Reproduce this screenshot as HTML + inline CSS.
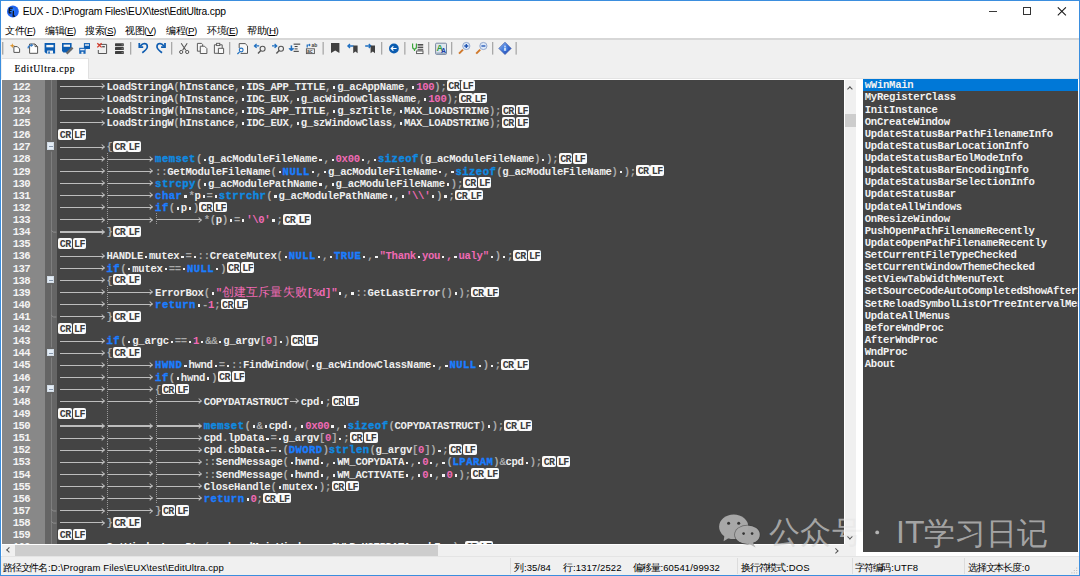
<!DOCTYPE html>
<html><head><meta charset="utf-8">
<style>
*{margin:0;padding:0;box-sizing:border-box}
html,body{width:1080px;height:576px;overflow:hidden;background:#fff;font-family:"Liberation Sans",sans-serif}
#win{position:absolute;left:0;top:0;width:1080px;height:576px;background:#fff;overflow:hidden}
.bd{position:absolute;background:#3b8ede}
.abs{position:absolute}
/* title */
#title{position:absolute;left:22.7px;top:6.4px;font-size:10.3px;color:#000;white-space:nowrap;letter-spacing:-0.22px}
/* menu */
.mi{position:absolute;top:24.5px;font-size:9.8px;letter-spacing:-0.45px;color:#000;white-space:nowrap}
#toolbar{position:absolute;left:1px;top:37.8px;width:1078px;height:42px;background:#f0f0f0;border-top:2px solid #d7d7d7}
.sep{position:absolute;top:42px;width:1.4px;height:12.6px;background:#a8a8a8}
#tab{position:absolute;left:1.5px;top:58.4px;width:87.5px;height:21px;background:#fff;border-right:1px solid #e0e0e0;border-top:1px solid #e2e2e2}
#tabtxt{position:absolute;left:14.6px;top:63px;font-family:"Liberation Serif",serif;font-size:9.6px;letter-spacing:0.66px;color:#000;font-weight:normal;-webkit-text-stroke:0.15px #000;white-space:nowrap}
#wline{position:absolute;left:88px;top:77.6px;width:991px;height:1px;background:#e4e4e4}
#wline2{position:absolute;left:1px;top:78.6px;width:1078px;height:1.4px;background:#fff}
/* editor */
#ed{position:absolute;left:2px;top:80px;width:842px;height:464px;background:#444;overflow:hidden}
#lnm{position:absolute;left:0;top:0;width:43px;height:464px;background:#888}
#fldm{position:absolute;left:43px;top:0;width:12px;height:464px;background:#656565}
#fline{position:absolute;left:48.6px;top:0;width:1.4px;height:464px;background:#7e7e7e}
.fbox{position:absolute;left:46.8px;width:7.4px;height:7.4px;background:#e4edf6;border:0.6px solid #d2dce6;box-shadow:0 0 0 1.6px #656565}
.fbox:after{content:"";position:absolute;left:1.6px;top:3px;width:3.4px;height:1px;background:#8696ac}
.fend{position:absolute;left:49px;width:5px;height:4px;border-left:0;border-bottom:1px solid #8a8a8a}
#code{position:absolute;left:-2px;top:-80px;width:1080px;height:576px}
.ln{position:absolute;left:0;height:12.12px;width:1080px}
.ln span,.ln b{position:absolute;top:0.8px;font-family:"Liberation Mono",monospace;font-size:10.6px;line-height:12.12px;white-space:pre;font-weight:bold}
.ln span{letter-spacing:-0.29px}
.ln b{letter-spacing:0.44px;-webkit-text-stroke:0.35px currentColor}
.tx{color:#eeeeee}
.op{color:#a9a9a9}
.nm{color:#f06ab4}
.st{color:#f06ab4}
.cj{font-family:"Liberation Sans",sans-serif !important;font-weight:normal !important;font-size:12.3px !important;letter-spacing:0 !important;top:-0.2px !important}
.kw1{color:#0f8be3}
.kw2{color:#1a7dff}
.tb{position:absolute;top:6.1px;height:1.1px;background:#bdbdbd}
.tb:after{content:"";position:absolute;right:0px;top:-1.7px;width:3.1px;height:3.1px;border-right:1.1px solid #bdbdbd;border-top:1.1px solid #bdbdbd;transform:rotate(45deg);transform-origin:center}
.sp{position:absolute;top:6.1px;width:2.2px;height:2.6px;background:#f4f4f4}
.eol{position:absolute;top:0.6px;width:13.6px;height:10.8px;background:#fafafa;border-radius:2px;color:#3c3c3c;font-style:normal;font-family:"Liberation Mono",monospace;font-weight:bold;font-size:10px;line-height:13.1px;text-align:center;letter-spacing:-0.6px;overflow:hidden}
.gd{position:absolute;top:0;width:1px;height:12.12px;background:repeating-linear-gradient(to bottom,#9a9a9a 0,#9a9a9a 1px,transparent 1px,transparent 2px)}
.no{position:absolute;left:2px;width:28px;padding-top:0.8px;text-align:right;font-family:"Liberation Mono",monospace;font-weight:bold;font-size:10.6px;line-height:12.12px;letter-spacing:-0.6px;color:#f4f4f4}
/* scrollbars */
#vsb{position:absolute;left:844px;top:80px;width:12px;height:464px;background:#f0f0f0;border-left:1px solid #fff}
#hsb{position:absolute;left:2px;top:544px;width:842px;height:12px;background:#f0f0f0;border-top:1px solid #fff}
#corner{position:absolute;left:844px;top:544px;width:12px;height:12px;background:#f0f0f0}
.chev{position:absolute;width:3.8px;height:3.8px;border-left:1.7px solid #505050;border-top:1.7px solid #505050}
/* symbol list */
#syl{position:absolute;left:863px;top:79px;width:215px;height:472.6px;background:#444;overflow:hidden}
.sy{position:absolute;left:0;width:215px;height:12.12px;padding-left:1.8px;padding-top:0.3px;font-family:"Liberation Mono",monospace;font-weight:bold;font-size:10.6px;line-height:12.12px;letter-spacing:-0.29px;color:#f2f2f2;white-space:pre}
.sy.sel{background:#0078d7}
/* status */
#status{position:absolute;left:1px;top:556px;width:1078px;height:19px;background:#f0f0f0;border-top:1px solid #e4e4e4}
.cjs{letter-spacing:-1.22px;margin-right:1.1px}
.stt{position:absolute;top:561.5px;font-size:9.5px;letter-spacing:0.12px;color:#000;white-space:nowrap}
.ssep{position:absolute;top:558px;width:1px;height:16px;background:#dcdcdc}
#wm{position:absolute;left:0;top:0;width:1080px;height:576px;pointer-events:none}
.wmt{position:absolute;font-size:31px;line-height:40px;font-weight:300;color:rgba(214,214,214,0.68);white-space:nowrap}
</style></head><body><div id="win">
<div class="bd" style="left:0;top:0;width:1080px;height:1px"></div>
<div class="bd" style="left:0;top:0;width:1.3px;height:576px"></div>
<div class="bd" style="left:1078.7px;top:0;width:1.3px;height:576px"></div>
<div class="bd" style="left:0;top:574.6px;width:1080px;height:1.4px"></div>

<!-- title bar -->
<svg class="abs" style="left:6px;top:4.5px" width="14" height="14" viewBox="0 0 14 14">
 <circle cx="6.9" cy="6.5" r="5.9" fill="#1f63ee"/>
 <circle cx="6.2" cy="5.5" r="3" fill="#2f8cff" opacity="0.5"/>
 <path d="M3.3 3.1 L6.7 3.1 M3.1 5.4 L5.6 5.4 M2.9 7.8 L5.4 7.8 M3.5 3.1 L3.1 7.8 M7.4 5.8 L7.2 11.2 L9 11.2" stroke="#101010" stroke-width="1.25" fill="none"/>
</svg>
<div id="title">EUX - D:\Program Files\EUX\test\EditUltra.cpp</div>
<div class="abs" style="left:989px;top:10.5px;width:8px;height:1.1px;background:#3a3a3a"></div>
<div class="abs" style="left:1023.1px;top:7.1px;width:7.8px;height:7.8px;border:1px solid #333"></div>
<svg class="abs" style="left:1057px;top:7px" width="10" height="9" viewBox="0 0 10 9"><path d="M0.8 0.3 L8.9 8.4 M8.9 0.3 L0.8 8.4" stroke="#1a1a1a" stroke-width="1.05"/></svg>

<!-- menu -->
<div class="mi" style="left:5px">文件(<u>F</u>)</div>
<div class="mi" style="left:45px">编辑(<u>E</u>)</div>
<div class="mi" style="left:85px">搜索(<u>S</u>)</div>
<div class="mi" style="left:125px">视图(<u>V</u>)</div>
<div class="mi" style="left:166px">编程(<u>P</u>)</div>
<div class="mi" style="left:207px">环境(<u>E</u>)</div>
<div class="mi" style="left:247px">帮助(<u>H</u>)</div>

<div id="toolbar"></div>
<svg class="abs" style="left:0;top:0" width="540" height="60" viewBox="0 0 540 60">
<!-- gripper -->
<rect x="2" y="42" width="1.4" height="12.6" fill="#a8a8a8"/>
<!-- separators -->
<g fill="#a9a9a9">
<rect x="130" y="42" width="1.3" height="12.6"/>
<rect x="171" y="42" width="1.3" height="12.6"/>
<rect x="229" y="42" width="1.3" height="12.6"/>
<rect x="322.5" y="42" width="1.3" height="12.6"/>
<rect x="381" y="42" width="1.3" height="12.6"/>
<rect x="404.2" y="42" width="1.3" height="12.6"/>
<rect x="428" y="42" width="1.3" height="12.6"/>
<rect x="451" y="42" width="1.3" height="12.6"/>
<rect x="492" y="42" width="1.3" height="12.6"/>
<rect x="515.5" y="42" width="1.3" height="12.6"/>
</g>
<!-- 1 new -->
<path d="M13.9 46.6 H17.3 L19.6 48.9 V52.4 H13.9 Z" fill="#fff" stroke="#555" stroke-width="1"/>
<path d="M12.3 43.3 L13 45.1 L14.8 45.8 L13 46.5 L12.3 48.3 L11.6 46.5 L9.8 45.8 L11.6 45.1 Z" fill="#dc9530"/>
<!-- 2 open -->
<path d="M29.6 44 H35 L37.6 46.6 V53.3 H29.6 Z" fill="#fff" stroke="#555" stroke-width="1"/>
<path d="M35 44 V46.6 H37.6" fill="none" stroke="#555" stroke-width="0.9"/>
<path d="M28 48.3 Q28.4 45.3 31.8 45.2" fill="none" stroke="#3b7fc8" stroke-width="1.3"/>
<path d="M31 43.6 L33.4 45.3 L31 47 Z" fill="#3b7fc8"/>
<!-- 3 save -->
<path d="M44.6 43.1 H55.1 V53.6 H46.1 L44.6 52.1 Z" fill="#0c5db2"/>
<rect x="46.3" y="44.9" width="7.2" height="2.4" fill="#f6f6f6"/>
<rect x="47.2" y="50.6" width="5.8" height="3" fill="#f4f4f4"/>
<rect x="48.3" y="51.4" width="1.5" height="2.2" fill="#0c5db2"/>
<!-- 4 save as -->
<path d="M62 43 H71.6 V50 L68 52.4 H63.4 L62 51 Z" fill="#0c5db2"/>
<rect x="63.6" y="44.6" width="6.4" height="2.2" fill="#f6f6f6"/>
<path d="M66.6 53.6 L72.6 47.6" stroke="#6a6a6a" stroke-width="2.3"/>
<!-- 5 save all -->
<path d="M83.9 43.1 H90 V49 H83.9 Z" fill="#0c5db2"/>
<rect x="84.9" y="44.3" width="4.1" height="1.4" fill="#f6f6f6"/>
<path d="M79.2 47.8 H85.6 V53.8 H79.2 Z" fill="#1a66b8"/>
<rect x="80.2" y="48.9" width="4.4" height="1.4" fill="#e8eef8"/>
<rect x="81.4" y="51.8" width="2" height="2" fill="#f4f4f4"/>
<!-- 6 close -->
<path d="M98.3 44.4 H106.6 V53.5 H98.3 V50" fill="none" stroke="#555" stroke-width="1"/>
<rect x="102.2" y="46" width="2.6" height="1.4" fill="#555"/>
<path d="M97.3 43.2 L101.6 47.4 M101.6 43.2 L97.3 47.4" stroke="#d33b2b" stroke-width="1.3"/>
<!-- 7 stack -->
<g fill="#3f3f3f">
<rect x="115" y="43.2" width="8.8" height="3" rx="0.6"/>
<rect x="115" y="47.1" width="8.8" height="3" rx="0.6"/>
<rect x="115" y="51" width="8.8" height="3" rx="0.6"/>
</g>
<g fill="#9a9a9a"><rect x="121.6" y="44.4" width="1.2" height="0.9"/><rect x="121.6" y="48.3" width="1.2" height="0.9"/><rect x="121.6" y="52.2" width="1.2" height="0.9"/></g>
<!-- 8 undo -->
<path d="M139.3 43.1 V47.1 H143.2" fill="none" stroke="#0e5cb0" stroke-width="1.75"/>
<path d="M140.2 46.3 Q142.2 43.6 144.3 43.5 Q147.4 43.5 147.3 47 Q147.2 49.1 142.3 52.8" fill="none" stroke="#0e5cb0" stroke-width="1.7"/>
<!-- 9 redo -->
<path d="M165 43.1 V47.1 H161.1" fill="none" stroke="#0e5cb0" stroke-width="1.75"/>
<path d="M164.1 46.3 Q162.1 43.6 160 43.5 Q156.9 43.5 157 47 Q157.1 49.1 162 52.8" fill="none" stroke="#0e5cb0" stroke-width="1.7"/>
<!-- 10 cut -->
<path d="M181.2 43.2 L185.8 50.2 M187.2 43.2 L182.6 50.2" stroke="#555" stroke-width="1.1"/>
<circle cx="181.2" cy="52" r="1.6" fill="none" stroke="#555" stroke-width="1"/>
<circle cx="187.2" cy="52" r="1.6" fill="none" stroke="#555" stroke-width="1"/>
<!-- 11 copy -->
<path d="M197.4 43.4 H201.6 L202.6 44.4 V51.2 H197.4 Z" fill="#f7f7f7" stroke="#555" stroke-width="0.95"/>
<path d="M200.3 46.2 H204.5 L206.9 48.6 V53.5 H200.3 Z" fill="#f7f7f7" stroke="#555" stroke-width="0.95"/>
<!-- 12 paste -->
<path d="M214.4 44.8 H222.2 V53.3 H214.4 Z" fill="#f4f4f4" stroke="#555" stroke-width="0.95"/>
<rect x="216.6" y="43.3" width="3.2" height="2.3" fill="#f4f4f4" stroke="#555" stroke-width="0.9"/>
<path d="M218.4 48.3 H223.6 V53.5 H218.4 Z" fill="#fafafa" stroke="#555" stroke-width="0.95"/>
<!-- 13 find -->
<path d="M239.2 48 V43.6 H245.2 L247.5 45.9 V53.4 H240.6" fill="#f8f8f8" stroke="#555" stroke-width="1"/>
<circle cx="241.2" cy="50" r="1.9" fill="none" stroke="#1f6fc0" stroke-width="1.1"/>
<path d="M239.6 51.8 L237.4 54" stroke="#1f6fc0" stroke-width="1.2"/>
<!-- 14 find prev -->
<path d="M254.4 45.9 H259.2 M256.6 43.9 L254.5 45.9 L256.6 47.9" fill="none" stroke="#1f6fc0" stroke-width="1.3"/>
<circle cx="262.6" cy="48.7" r="2.5" fill="none" stroke="#555" stroke-width="1.1"/>
<path d="M260.8 50.6 L258 53.4" stroke="#555" stroke-width="1.4"/>
<!-- 15 find next -->
<path d="M272 45.9 H276.6 M274.6 43.9 L276.7 45.9 L274.6 47.9" fill="none" stroke="#1f6fc0" stroke-width="1.3"/>
<circle cx="281" cy="48.7" r="2.5" fill="none" stroke="#555" stroke-width="1.1"/>
<path d="M279.2 50.6 L276.4 53.4" stroke="#555" stroke-width="1.4"/>
<!-- 16 goto -->
<path d="M291.4 45.4 V50" stroke="#1f6fc0" stroke-width="1.5"/>
<path d="M289 48.6 L291.4 51 L293.8 48.6 Z" fill="#1f6fc0" stroke="#1f6fc0" stroke-width="0.8"/>
<g fill="#444"><rect x="293.6" y="43.6" width="6.6" height="1.1"/><rect x="294.6" y="46" width="3" height="1"/><rect x="294.6" y="48.4" width="3" height="1"/><rect x="293.6" y="50.8" width="5.2" height="1.1"/></g>
<!-- 17 replace -->
<path d="M307.2 47.6 V45 H309.6" fill="none" stroke="#1f6fc0" stroke-width="1.2"/>
<path d="M309 43.5 L310.8 45 L309 46.5 Z" fill="#1f6fc0"/>
<text x="311.4" y="47.4" font-family="Liberation Sans" font-weight="bold" font-size="5" fill="#444">ab</text>
<rect x="306.4" y="48.8" width="8" height="4.8" fill="#f0f0f0" stroke="#555" stroke-width="0.9"/>
<text x="307" y="53.3" font-family="Liberation Sans" font-weight="bold" font-size="5" fill="#444">ac</text>
<!-- 18 bookmark -->
<path d="M331 43 H339.4 V53 L335.2 50.4 L331 53 Z" fill="#404040"/>
<!-- 19 prev bm -->
<path d="M347.8 46 H353.6 M350 44 L347.9 46 L350 48" fill="none" stroke="#1f6fc0" stroke-width="1.3"/>
<path d="M353.2 45.4 H357.6 V53.2 L355.4 51.6 L353.2 53.2 Z" fill="#404040"/>
<!-- 20 next bm -->
<path d="M365.2 46 H371 M368.8 44 L370.9 46 L368.8 48" fill="none" stroke="#1f6fc0" stroke-width="1.3"/>
<path d="M370.6 45.4 H375 V53.2 L372.8 51.6 L370.6 53.2 Z" fill="#404040"/>
<!-- 21 back circle -->
<circle cx="393.9" cy="48.5" r="4.9" fill="#0b5cb0"/>
<path d="M396.6 48.5 H391.4 M393.4 46.3 L391.2 48.5 L393.4 50.7" fill="none" stroke="#fff" stroke-width="1.2"/>
<!-- 22 plugin -->
<path d="M412.6 43.4 V46.4 Q412.6 49.1 414.5 49.1 Q416.4 49.1 416.4 46.4 V43.4 M414.5 49.1 V51" fill="none" stroke="#36a336" stroke-width="1.15"/>
<g fill="#505050"><rect x="417.6" y="44" width="5.6" height="1.6"/><rect x="417.6" y="46.6" width="5.6" height="1.6"/><rect x="417.6" y="49.2" width="5.6" height="1.2"/></g>
<rect x="416.6" y="51" width="6.4" height="2.6" fill="#fff" stroke="#505050" stroke-width="0.9"/>
<!-- 23 AA -->
<rect x="435.6" y="43.2" width="10.9" height="11.2" rx="1" fill="#dfe6ee" stroke="#6a7a96" stroke-width="0.9"/>
<rect x="436.2" y="52.4" width="9.8" height="1.7" fill="#9fb0c4"/>
<text x="436.4" y="51" font-family="Liberation Sans" font-weight="bold" font-size="9" fill="#2e9a3e">A</text>
<text x="441" y="52.6" font-family="Liberation Sans" font-weight="bold" font-size="6.8" fill="#1a3aa8">A</text>
<!-- 24 zoom in -->
<path d="M459 53.6 L463 49.6" stroke="#d0782a" stroke-width="2"/>
<circle cx="466.3" cy="46" r="3.6" fill="#dce8f8" stroke="#8aa0c8" stroke-width="0.9"/>
<path d="M464.3 46 H468.3 M466.3 44 V48" stroke="#1a4fb0" stroke-width="1.3"/>
<!-- 25 zoom out -->
<path d="M476.2 53.6 L480.2 49.6" stroke="#d0782a" stroke-width="2"/>
<circle cx="483.4" cy="46" r="3.6" fill="#dce8f8" stroke="#8aa0c8" stroke-width="0.9"/>
<path d="M481.4 46 H485.4" stroke="#1a4fb0" stroke-width="1.3"/>
<!-- 26 info -->
<defs><linearGradient id="ig" x1="0" y1="0" x2="1" y2="1"><stop offset="0" stop-color="#9cc0f4"/><stop offset="0.5" stop-color="#3f74d8"/><stop offset="1" stop-color="#1a3fa8"/></linearGradient></defs>
<path d="M505 42.2 L511.2 48.4 L505 54.6 L498.8 48.4 Z" fill="url(#ig)" stroke="#2a4aa0" stroke-width="0.6"/>
<circle cx="505" cy="48.4" r="2.6" fill="#4d86e0"/>
<rect x="504.3" y="47.6" width="1.4" height="3.2" fill="#fff"/>
<circle cx="505" cy="46.3" r="0.75" fill="#fff"/>
</svg>

<div id="tab"></div>
<div id="tabtxt">EditUltra.cpp</div>
<div id="wline"></div><div id="wline2"></div>

<div id="ed">
 <div id="lnm"></div>
 <div id="fldm"></div>
 <div id="fline"></div>
 <div id="foldmk" style="position:absolute;left:-2px;top:-80px;width:1080px;height:576px">
<i class="fbox" style="top:142.47px"></i>
<i class="fbox" style="top:275.83px"></i>
<i class="fbox" style="top:348.58px"></i>
<i class="fbox" style="top:384.95px"></i>
<svg style="position:absolute;left:0;top:0;overflow:visible" width="1" height="1"><path d="M51.2 230.14 L53.2 232.14 H56.4" stroke="#8c8c8c" stroke-width="1" fill="none"/></svg>
<svg style="position:absolute;left:0;top:0;overflow:visible" width="1" height="1"><path d="M51.2 315.01 L53.2 317.01 H56.4" stroke="#8c8c8c" stroke-width="1" fill="none"/></svg>
<svg style="position:absolute;left:0;top:0;overflow:visible" width="1" height="1"><path d="M51.2 508.99 L53.2 510.99 H56.4" stroke="#8c8c8c" stroke-width="1" fill="none"/></svg>
<svg style="position:absolute;left:0;top:0;overflow:visible" width="1" height="1"><path d="M51.2 521.11 L53.2 523.11 H56.4" stroke="#8c8c8c" stroke-width="1" fill="none"/></svg>
 </div>
 <div id="code">
<div class="ln" style="top:79.85px"><i class="tb" style="left:59.80px;width:43.96px"></i><span class="tx" style="left:106.56px">LoadStringA</span><span class="op" style="left:173.33px">(</span><span class="tx" style="left:179.40px">hInstance</span><span class="op" style="left:234.03px">,</span><i class="sp" style="left:242.13px"></i><span class="tx" style="left:246.17px">IDS_APP_TITLE</span><span class="op" style="left:325.08px">,</span><i class="sp" style="left:333.19px"></i><span class="tx" style="left:337.22px">g_acAppName</span><span class="op" style="left:403.99px">,</span><i class="sp" style="left:412.10px"></i><span class="nm" style="left:416.13px">100</span><span class="op" style="left:434.34px">)</span><span class="op" style="left:440.41px">;</span><i class="eol" style="left:446.88px">CR</i><i class="eol" style="left:461.08px">LF</i></div>
<div class="no" style="top:79.85px">122</div>
<div class="ln" style="top:91.97px"><i class="tb" style="left:59.80px;width:43.96px"></i><span class="tx" style="left:106.56px">LoadStringA</span><span class="op" style="left:173.33px">(</span><span class="tx" style="left:179.40px">hInstance</span><span class="op" style="left:234.03px">,</span><i class="sp" style="left:242.13px"></i><span class="tx" style="left:246.17px">IDC_EUX</span><span class="op" style="left:288.66px">,</span><i class="sp" style="left:296.76px"></i><span class="tx" style="left:300.80px">g_acWindowClassName</span><span class="op" style="left:416.13px">,</span><i class="sp" style="left:424.24px"></i><span class="nm" style="left:428.27px">100</span><span class="op" style="left:446.48px">)</span><span class="op" style="left:452.55px">;</span><i class="eol" style="left:459.02px">CR</i><i class="eol" style="left:473.22px">LF</i></div>
<div class="no" style="top:91.97px">123</div>
<div class="ln" style="top:104.10px"><i class="tb" style="left:59.80px;width:43.96px"></i><span class="tx" style="left:106.56px">LoadStringW</span><span class="op" style="left:173.33px">(</span><span class="tx" style="left:179.40px">hInstance</span><span class="op" style="left:234.03px">,</span><i class="sp" style="left:242.13px"></i><span class="tx" style="left:246.17px">IDS_APP_TITLE</span><span class="op" style="left:325.08px">,</span><i class="sp" style="left:333.19px"></i><span class="tx" style="left:337.22px">g_szTitle</span><span class="op" style="left:391.85px">,</span><i class="sp" style="left:399.95px"></i><span class="tx" style="left:403.99px">MAX_LOADSTRING</span><span class="op" style="left:488.97px">)</span><span class="op" style="left:495.04px">;</span><i class="eol" style="left:501.51px">CR</i><i class="eol" style="left:515.71px">LF</i></div>
<div class="no" style="top:104.10px">124</div>
<div class="ln" style="top:116.22px"><i class="tb" style="left:59.80px;width:43.96px"></i><span class="tx" style="left:106.56px">LoadStringW</span><span class="op" style="left:173.33px">(</span><span class="tx" style="left:179.40px">hInstance</span><span class="op" style="left:234.03px">,</span><i class="sp" style="left:242.13px"></i><span class="tx" style="left:246.17px">IDC_EUX</span><span class="op" style="left:288.66px">,</span><i class="sp" style="left:296.76px"></i><span class="tx" style="left:300.80px">g_szWindowClass</span><span class="op" style="left:391.85px">,</span><i class="sp" style="left:399.95px"></i><span class="tx" style="left:403.99px">MAX_LOADSTRING</span><span class="op" style="left:488.97px">)</span><span class="op" style="left:495.04px">;</span><i class="eol" style="left:501.51px">CR</i><i class="eol" style="left:515.71px">LF</i></div>
<div class="no" style="top:116.22px">125</div>
<div class="ln" style="top:128.35px"><i class="eol" style="left:58.40px">CR</i><i class="eol" style="left:72.60px">LF</i></div>
<div class="no" style="top:128.35px">126</div>
<div class="ln" style="top:140.47px"><i class="tb" style="left:59.80px;width:43.96px"></i><span class="op" style="left:106.56px">{</span><i class="eol" style="left:113.03px">CR</i><i class="eol" style="left:127.23px">LF</i></div>
<div class="no" style="top:140.47px">127</div>
<div class="ln" style="top:152.59px"><i class="tb" style="left:59.80px;width:43.96px"></i><i class="tb" style="left:108.36px;width:43.96px"></i><b class="kw1" style="left:155.12px">memset</b><span class="op" style="left:195.92px">(</span><i class="sp" style="left:204.03px"></i><span class="tx" style="left:208.06px">g_acModuleFileName</span><i class="sp" style="left:319.36px"></i><span class="op" style="left:323.39px">,</span><i class="sp" style="left:331.50px"></i><span class="nm" style="left:335.53px">0x00</span><i class="sp" style="left:361.84px"></i><span class="op" style="left:365.88px">,</span><i class="sp" style="left:373.98px"></i><b class="kw1" style="left:378.02px">sizeof</b><span class="op" style="left:418.82px">(</span><span class="tx" style="left:424.89px">g_acModuleFileName</span><span class="op" style="left:534.15px">)</span><i class="sp" style="left:542.25px"></i><span class="op" style="left:546.29px">)</span><span class="op" style="left:552.36px">;</span><i class="eol" style="left:558.83px">CR</i><i class="eol" style="left:573.03px">LF</i><i class="gd" style="left:107.16px"></i></div>
<div class="no" style="top:152.59px">128</div>
<div class="ln" style="top:164.72px"><i class="tb" style="left:59.80px;width:43.96px"></i><i class="tb" style="left:108.36px;width:43.96px"></i><span class="op" style="left:155.12px">:</span><span class="op" style="left:161.19px">:</span><span class="tx" style="left:167.26px">GetModuleFileName</span><span class="op" style="left:270.45px">(</span><i class="sp" style="left:278.56px"></i><b class="kw2" style="left:282.59px">NULL</b><i class="sp" style="left:311.82px"></i><span class="op" style="left:315.86px">,</span><i class="sp" style="left:323.96px"></i><span class="tx" style="left:328.00px">g_acModuleFileName</span><i class="sp" style="left:439.29px"></i><span class="op" style="left:443.33px">,</span><i class="sp" style="left:451.43px"></i><b class="kw1" style="left:455.47px">sizeof</b><span class="op" style="left:496.27px">(</span><span class="tx" style="left:502.34px">g_acModuleFileName</span><span class="op" style="left:611.60px">)</span><i class="sp" style="left:619.70px"></i><span class="op" style="left:623.74px">)</span><span class="op" style="left:629.81px">;</span><i class="eol" style="left:636.28px">CR</i><i class="eol" style="left:650.48px">LF</i><i class="gd" style="left:107.16px"></i></div>
<div class="no" style="top:164.72px">129</div>
<div class="ln" style="top:176.84px"><i class="tb" style="left:59.80px;width:43.96px"></i><i class="tb" style="left:108.36px;width:43.96px"></i><b class="kw1" style="left:155.12px">strcpy</b><span class="op" style="left:195.92px">(</span><i class="sp" style="left:204.03px"></i><span class="tx" style="left:208.06px">g_acModulePathName</span><i class="sp" style="left:319.36px"></i><span class="op" style="left:323.39px">,</span><i class="sp" style="left:331.50px"></i><span class="tx" style="left:335.53px">g_acModuleFileName</span><i class="sp" style="left:446.82px"></i><span class="op" style="left:450.86px">)</span><span class="op" style="left:456.93px">;</span><i class="eol" style="left:463.40px">CR</i><i class="eol" style="left:477.60px">LF</i><i class="gd" style="left:107.16px"></i></div>
<div class="no" style="top:176.84px">130</div>
<div class="ln" style="top:188.97px"><i class="tb" style="left:59.80px;width:43.96px"></i><i class="tb" style="left:108.36px;width:43.96px"></i><b class="kw2" style="left:155.12px">char</b><i class="sp" style="left:184.35px"></i><span class="op" style="left:188.39px">*</span><span class="tx" style="left:194.46px">p</span><i class="sp" style="left:202.56px"></i><span class="op" style="left:206.60px">=</span><i class="sp" style="left:214.70px"></i><b class="kw1" style="left:218.74px">strrchr</b><span class="op" style="left:266.34px">(</span><i class="sp" style="left:274.44px"></i><span class="tx" style="left:278.48px">g_acModulePathName</span><i class="sp" style="left:389.77px"></i><span class="op" style="left:393.81px">,</span><i class="sp" style="left:401.91px"></i><span class="st" style="left:405.95px">&#x27;\\&#x27;</span><i class="sp" style="left:432.26px"></i><span class="op" style="left:436.30px">)</span><i class="sp" style="left:444.40px"></i><span class="op" style="left:448.44px">;</span><i class="eol" style="left:454.91px">CR</i><i class="eol" style="left:469.11px">LF</i><i class="gd" style="left:107.16px"></i></div>
<div class="no" style="top:188.97px">131</div>
<div class="ln" style="top:201.09px"><i class="tb" style="left:59.80px;width:43.96px"></i><i class="tb" style="left:108.36px;width:43.96px"></i><b class="kw2" style="left:155.12px">if</b><span class="op" style="left:168.72px">(</span><i class="sp" style="left:176.82px"></i><span class="tx" style="left:180.86px">p</span><i class="sp" style="left:188.96px"></i><span class="op" style="left:193.00px">)</span><i class="eol" style="left:199.47px">CR</i><i class="eol" style="left:213.67px">LF</i><i class="gd" style="left:107.16px"></i></div>
<div class="no" style="top:201.09px">132</div>
<div class="ln" style="top:213.21px"><i class="tb" style="left:59.80px;width:43.96px"></i><i class="tb" style="left:108.36px;width:43.96px"></i><i class="tb" style="left:156.92px;width:43.96px"></i><span class="op" style="left:203.68px">*</span><span class="op" style="left:209.75px">(</span><span class="tx" style="left:215.82px">p</span><span class="op" style="left:221.89px">)</span><i class="sp" style="left:229.99px"></i><span class="op" style="left:234.03px">=</span><i class="sp" style="left:242.13px"></i><span class="st" style="left:246.17px">&#x27;\0&#x27;</span><i class="sp" style="left:272.48px"></i><span class="op" style="left:276.52px">;</span><i class="eol" style="left:282.99px">CR</i><i class="eol" style="left:297.19px">LF</i><i class="gd" style="left:107.16px"></i><i class="gd" style="left:155.72px"></i></div>
<div class="no" style="top:213.21px">133</div>
<div class="ln" style="top:225.34px"><i class="tb" style="left:59.80px;width:43.96px"></i><span class="op" style="left:106.56px">}</span><i class="eol" style="left:113.03px">CR</i><i class="eol" style="left:127.23px">LF</i></div>
<div class="no" style="top:225.34px">134</div>
<div class="ln" style="top:237.46px"><i class="eol" style="left:58.40px">CR</i><i class="eol" style="left:72.60px">LF</i></div>
<div class="no" style="top:237.46px">135</div>
<div class="ln" style="top:249.59px"><i class="tb" style="left:59.80px;width:43.96px"></i><span class="tx" style="left:106.56px">HANDLE</span><i class="sp" style="left:145.02px"></i><span class="tx" style="left:149.05px">mutex</span><i class="sp" style="left:181.44px"></i><span class="op" style="left:185.47px">=</span><i class="sp" style="left:193.57px"></i><span class="op" style="left:197.61px">:</span><span class="op" style="left:203.68px">:</span><span class="tx" style="left:209.75px">CreateMutex</span><span class="op" style="left:276.52px">(</span><i class="sp" style="left:284.62px"></i><b class="kw2" style="left:288.66px">NULL</b><i class="sp" style="left:317.89px"></i><span class="op" style="left:321.93px">,</span><i class="sp" style="left:330.03px"></i><b class="kw2" style="left:334.07px">TRUE</b><i class="sp" style="left:363.30px"></i><span class="op" style="left:367.34px">,</span><i class="sp" style="left:375.44px"></i><span class="st" style="left:379.48px">&quot;Thank</span><i class="sp" style="left:417.93px"></i><span class="st" style="left:421.97px">you</span><i class="sp" style="left:442.21px"></i><span class="st" style="left:446.25px">,</span><i class="sp" style="left:454.35px"></i><span class="st" style="left:458.39px">ualy&quot;</span><i class="sp" style="left:490.77px"></i><span class="op" style="left:494.81px">)</span><i class="sp" style="left:502.91px"></i><span class="op" style="left:506.95px">;</span><i class="eol" style="left:513.42px">CR</i><i class="eol" style="left:527.62px">LF</i></div>
<div class="no" style="top:249.59px">136</div>
<div class="ln" style="top:261.71px"><i class="tb" style="left:59.80px;width:43.96px"></i><b class="kw2" style="left:106.56px">if</b><span class="op" style="left:120.16px">(</span><i class="sp" style="left:128.26px"></i><span class="tx" style="left:132.30px">mutex</span><i class="sp" style="left:164.68px"></i><span class="op" style="left:168.72px">=</span><span class="op" style="left:174.79px">=</span><i class="sp" style="left:182.89px"></i><b class="kw2" style="left:186.93px">NULL</b><i class="sp" style="left:216.16px"></i><span class="op" style="left:220.20px">)</span><i class="eol" style="left:226.67px">CR</i><i class="eol" style="left:240.87px">LF</i></div>
<div class="no" style="top:261.71px">137</div>
<div class="ln" style="top:273.83px"><i class="tb" style="left:59.80px;width:43.96px"></i><span class="op" style="left:106.56px">{</span><i class="eol" style="left:113.03px">CR</i><i class="eol" style="left:127.23px">LF</i></div>
<div class="no" style="top:273.83px">138</div>
<div class="ln" style="top:285.96px"><i class="tb" style="left:59.80px;width:43.96px"></i><i class="tb" style="left:108.36px;width:43.96px"></i><span class="tx" style="left:155.12px">ErrorBox</span><span class="op" style="left:203.68px">(</span><i class="sp" style="left:211.78px"></i><span class="st" style="left:215.82px">&quot;</span><span class="st cj" style="left:221.89px">创</span><span class="st cj" style="left:234.03px">建</span><span class="st cj" style="left:246.17px">互</span><span class="st cj" style="left:258.31px">斥</span><span class="st cj" style="left:270.45px">量</span><span class="st cj" style="left:282.59px">失</span><span class="st cj" style="left:294.73px">败</span><span class="st" style="left:306.87px">[%d]&quot;</span><i class="sp" style="left:339.25px"></i><span class="op" style="left:343.29px">,</span><i class="sp" style="left:351.39px"></i><span class="op" style="left:355.43px">:</span><span class="op" style="left:361.50px">:</span><span class="tx" style="left:367.57px">GetLastError</span><span class="op" style="left:440.41px">(</span><span class="op" style="left:446.48px">)</span><i class="sp" style="left:454.58px"></i><span class="op" style="left:458.62px">)</span><span class="op" style="left:464.69px">;</span><i class="eol" style="left:471.16px">CR</i><i class="eol" style="left:485.36px">LF</i><i class="gd" style="left:107.16px"></i></div>
<div class="no" style="top:285.96px">139</div>
<div class="ln" style="top:298.08px"><i class="tb" style="left:59.80px;width:43.96px"></i><i class="tb" style="left:108.36px;width:43.96px"></i><b class="kw2" style="left:155.12px">return</b><i class="sp" style="left:197.96px"></i><span class="op" style="left:201.99px">-</span><span class="nm" style="left:208.06px">1</span><span class="op" style="left:214.13px">;</span><i class="eol" style="left:220.60px">CR</i><i class="eol" style="left:234.80px">LF</i><i class="gd" style="left:107.16px"></i></div>
<div class="no" style="top:298.08px">140</div>
<div class="ln" style="top:310.21px"><i class="tb" style="left:59.80px;width:43.96px"></i><span class="op" style="left:106.56px">}</span><i class="eol" style="left:113.03px">CR</i><i class="eol" style="left:127.23px">LF</i></div>
<div class="no" style="top:310.21px">141</div>
<div class="ln" style="top:322.33px"><i class="eol" style="left:58.40px">CR</i><i class="eol" style="left:72.60px">LF</i></div>
<div class="no" style="top:322.33px">142</div>
<div class="ln" style="top:334.45px"><i class="tb" style="left:59.80px;width:43.96px"></i><b class="kw2" style="left:106.56px">if</b><span class="op" style="left:120.16px">(</span><i class="sp" style="left:128.26px"></i><span class="tx" style="left:132.30px">g_argc</span><i class="sp" style="left:170.75px"></i><span class="op" style="left:174.79px">=</span><span class="op" style="left:180.86px">=</span><i class="sp" style="left:188.96px"></i><span class="nm" style="left:193.00px">1</span><i class="sp" style="left:201.10px"></i><span class="op" style="left:205.14px">&amp;</span><span class="op" style="left:211.21px">&amp;</span><i class="sp" style="left:219.31px"></i><span class="tx" style="left:223.35px">g_argv</span><span class="op" style="left:259.77px">[</span><span class="nm" style="left:265.84px">0</span><span class="op" style="left:271.91px">]</span><i class="sp" style="left:280.01px"></i><span class="op" style="left:284.05px">)</span><i class="eol" style="left:290.52px">CR</i><i class="eol" style="left:304.72px">LF</i></div>
<div class="no" style="top:334.45px">143</div>
<div class="ln" style="top:346.58px"><i class="tb" style="left:59.80px;width:43.96px"></i><span class="op" style="left:106.56px">{</span><i class="eol" style="left:113.03px">CR</i><i class="eol" style="left:127.23px">LF</i></div>
<div class="no" style="top:346.58px">144</div>
<div class="ln" style="top:358.70px"><i class="tb" style="left:59.80px;width:43.96px"></i><i class="tb" style="left:108.36px;width:43.96px"></i><b class="kw2" style="left:155.12px">HWND</b><i class="sp" style="left:184.35px"></i><span class="tx" style="left:188.39px">hwnd</span><i class="sp" style="left:214.70px"></i><span class="op" style="left:218.74px">=</span><i class="sp" style="left:226.84px"></i><span class="op" style="left:230.88px">:</span><span class="op" style="left:236.95px">:</span><span class="tx" style="left:243.02px">FindWindow</span><span class="op" style="left:303.72px">(</span><i class="sp" style="left:311.82px"></i><span class="tx" style="left:315.86px">g_acWindowClassName</span><i class="sp" style="left:433.22px"></i><span class="op" style="left:437.26px">,</span><i class="sp" style="left:445.36px"></i><b class="kw2" style="left:449.40px">NULL</b><i class="sp" style="left:478.63px"></i><span class="op" style="left:482.67px">)</span><i class="sp" style="left:490.77px"></i><span class="op" style="left:494.81px">;</span><i class="eol" style="left:501.28px">CR</i><i class="eol" style="left:515.48px">LF</i><i class="gd" style="left:107.16px"></i></div>
<div class="no" style="top:358.70px">145</div>
<div class="ln" style="top:370.83px"><i class="tb" style="left:59.80px;width:43.96px"></i><i class="tb" style="left:108.36px;width:43.96px"></i><b class="kw2" style="left:155.12px">if</b><span class="op" style="left:168.72px">(</span><i class="sp" style="left:176.82px"></i><span class="tx" style="left:180.86px">hwnd</span><i class="sp" style="left:207.17px"></i><span class="op" style="left:211.21px">)</span><i class="eol" style="left:217.68px">CR</i><i class="eol" style="left:231.88px">LF</i><i class="gd" style="left:107.16px"></i></div>
<div class="no" style="top:370.83px">146</div>
<div class="ln" style="top:382.95px"><i class="tb" style="left:59.80px;width:43.96px"></i><i class="tb" style="left:108.36px;width:43.96px"></i><span class="op" style="left:155.12px">{</span><i class="eol" style="left:161.59px">CR</i><i class="eol" style="left:175.79px">LF</i><i class="gd" style="left:107.16px"></i></div>
<div class="no" style="top:382.95px">147</div>
<div class="ln" style="top:395.07px"><i class="tb" style="left:59.80px;width:43.96px"></i><i class="tb" style="left:108.36px;width:43.96px"></i><i class="tb" style="left:156.92px;width:43.96px"></i><span class="tx" style="left:203.68px">COPYDATASTRUCT</span><i class="tb" style="left:290.46px;width:7.54px"></i><span class="tx" style="left:300.80px">cpd</span><i class="sp" style="left:321.05px"></i><span class="op" style="left:325.08px">;</span><i class="eol" style="left:331.55px">CR</i><i class="eol" style="left:345.75px">LF</i><i class="gd" style="left:107.16px"></i><i class="gd" style="left:155.72px"></i></div>
<div class="no" style="top:395.07px">148</div>
<div class="ln" style="top:407.20px"><i class="eol" style="left:58.40px">CR</i><i class="eol" style="left:72.60px">LF</i><i class="gd" style="left:107.16px"></i><i class="gd" style="left:155.72px"></i></div>
<div class="no" style="top:407.20px">149</div>
<div class="ln" style="top:419.32px"><i class="tb" style="left:59.80px;width:43.96px"></i><i class="tb" style="left:108.36px;width:43.96px"></i><i class="tb" style="left:156.92px;width:43.96px"></i><b class="kw1" style="left:203.68px">memset</b><span class="op" style="left:244.48px">(</span><i class="sp" style="left:252.59px"></i><span class="op" style="left:256.62px">&amp;</span><i class="sp" style="left:264.73px"></i><span class="tx" style="left:268.76px">cpd</span><i class="sp" style="left:289.00px"></i><span class="op" style="left:293.04px">,</span><i class="sp" style="left:301.14px"></i><span class="nm" style="left:305.18px">0x00</span><i class="sp" style="left:331.49px"></i><span class="op" style="left:335.53px">,</span><i class="sp" style="left:343.63px"></i><b class="kw1" style="left:347.67px">sizeof</b><span class="op" style="left:388.47px">(</span><span class="tx" style="left:394.54px">COPYDATASTRUCT</span><span class="op" style="left:479.52px">)</span><i class="sp" style="left:487.62px"></i><span class="op" style="left:491.66px">)</span><span class="op" style="left:497.73px">;</span><i class="eol" style="left:504.20px">CR</i><i class="eol" style="left:518.40px">LF</i><i class="gd" style="left:107.16px"></i><i class="gd" style="left:155.72px"></i></div>
<div class="no" style="top:419.32px">150</div>
<div class="ln" style="top:431.45px"><i class="tb" style="left:59.80px;width:43.96px"></i><i class="tb" style="left:108.36px;width:43.96px"></i><i class="tb" style="left:156.92px;width:43.96px"></i><span class="tx" style="left:203.68px">cpd</span><span class="op" style="left:221.89px">.</span><span class="tx" style="left:227.96px">lpData</span><i class="sp" style="left:266.42px"></i><span class="op" style="left:270.45px">=</span><i class="sp" style="left:278.56px"></i><span class="tx" style="left:282.59px">g_argv</span><span class="op" style="left:319.01px">[</span><span class="nm" style="left:325.08px">0</span><span class="op" style="left:331.15px">]</span><i class="sp" style="left:339.25px"></i><span class="op" style="left:343.29px">;</span><i class="eol" style="left:349.76px">CR</i><i class="eol" style="left:363.96px">LF</i><i class="gd" style="left:107.16px"></i><i class="gd" style="left:155.72px"></i></div>
<div class="no" style="top:431.45px">151</div>
<div class="ln" style="top:443.57px"><i class="tb" style="left:59.80px;width:43.96px"></i><i class="tb" style="left:108.36px;width:43.96px"></i><i class="tb" style="left:156.92px;width:43.96px"></i><span class="tx" style="left:203.68px">cpd</span><span class="op" style="left:221.89px">.</span><span class="tx" style="left:227.96px">cbData</span><i class="sp" style="left:266.42px"></i><span class="op" style="left:270.45px">=</span><i class="sp" style="left:278.56px"></i><span class="op" style="left:282.59px">(</span><b class="kw2" style="left:288.66px">DWORD</b><span class="op" style="left:322.66px">)</span><b class="kw1" style="left:328.73px">strlen</b><span class="op" style="left:369.53px">(</span><span class="tx" style="left:375.60px">g_argv</span><span class="op" style="left:412.02px">[</span><span class="nm" style="left:418.09px">0</span><span class="op" style="left:424.16px">]</span><span class="op" style="left:430.23px">)</span><i class="sp" style="left:438.33px"></i><span class="op" style="left:442.37px">;</span><i class="eol" style="left:448.84px">CR</i><i class="eol" style="left:463.04px">LF</i><i class="gd" style="left:107.16px"></i><i class="gd" style="left:155.72px"></i></div>
<div class="no" style="top:443.57px">152</div>
<div class="ln" style="top:455.69px"><i class="tb" style="left:59.80px;width:43.96px"></i><i class="tb" style="left:108.36px;width:43.96px"></i><i class="tb" style="left:156.92px;width:43.96px"></i><span class="op" style="left:203.68px">:</span><span class="op" style="left:209.75px">:</span><span class="tx" style="left:215.82px">SendMessage</span><span class="op" style="left:282.59px">(</span><i class="sp" style="left:290.70px"></i><span class="tx" style="left:294.73px">hwnd</span><i class="sp" style="left:321.05px"></i><span class="op" style="left:325.08px">,</span><i class="sp" style="left:333.19px"></i><span class="tx" style="left:337.22px">WM_COPYDATA</span><i class="sp" style="left:406.03px"></i><span class="op" style="left:410.06px">,</span><i class="sp" style="left:418.17px"></i><span class="nm" style="left:422.20px">0</span><i class="sp" style="left:430.31px"></i><span class="op" style="left:434.34px">,</span><i class="sp" style="left:442.44px"></i><span class="op" style="left:446.48px">(</span><b class="kw2" style="left:452.55px">LPARAM</b><span class="op" style="left:493.35px">)</span><span class="op" style="left:499.42px">&amp;</span><span class="tx" style="left:505.49px">cpd</span><i class="sp" style="left:525.73px"></i><span class="op" style="left:529.77px">)</span><span class="op" style="left:535.84px">;</span><i class="eol" style="left:542.31px">CR</i><i class="eol" style="left:556.51px">LF</i><i class="gd" style="left:107.16px"></i><i class="gd" style="left:155.72px"></i></div>
<div class="no" style="top:455.69px">153</div>
<div class="ln" style="top:467.82px"><i class="tb" style="left:59.80px;width:43.96px"></i><i class="tb" style="left:108.36px;width:43.96px"></i><i class="tb" style="left:156.92px;width:43.96px"></i><span class="op" style="left:203.68px">:</span><span class="op" style="left:209.75px">:</span><span class="tx" style="left:215.82px">SendMessage</span><span class="op" style="left:282.59px">(</span><i class="sp" style="left:290.70px"></i><span class="tx" style="left:294.73px">hwnd</span><i class="sp" style="left:321.05px"></i><span class="op" style="left:325.08px">,</span><i class="sp" style="left:333.19px"></i><span class="tx" style="left:337.22px">WM_ACTIVATE</span><i class="sp" style="left:406.03px"></i><span class="op" style="left:410.06px">,</span><i class="sp" style="left:418.17px"></i><span class="nm" style="left:422.20px">0</span><i class="sp" style="left:430.31px"></i><span class="op" style="left:434.34px">,</span><i class="sp" style="left:442.44px"></i><span class="nm" style="left:446.48px">0</span><i class="sp" style="left:454.58px"></i><span class="op" style="left:458.62px">)</span><span class="op" style="left:464.69px">;</span><i class="eol" style="left:471.16px">CR</i><i class="eol" style="left:485.36px">LF</i><i class="gd" style="left:107.16px"></i><i class="gd" style="left:155.72px"></i></div>
<div class="no" style="top:467.82px">154</div>
<div class="ln" style="top:479.94px"><i class="tb" style="left:59.80px;width:43.96px"></i><i class="tb" style="left:108.36px;width:43.96px"></i><i class="tb" style="left:156.92px;width:43.96px"></i><span class="tx" style="left:203.68px">CloseHandle</span><span class="op" style="left:270.45px">(</span><i class="sp" style="left:278.56px"></i><span class="tx" style="left:282.59px">mutex</span><i class="sp" style="left:314.98px"></i><span class="op" style="left:319.01px">)</span><span class="op" style="left:325.08px">;</span><i class="eol" style="left:331.55px">CR</i><i class="eol" style="left:345.75px">LF</i><i class="gd" style="left:107.16px"></i><i class="gd" style="left:155.72px"></i></div>
<div class="no" style="top:479.94px">155</div>
<div class="ln" style="top:492.07px"><i class="tb" style="left:59.80px;width:43.96px"></i><i class="tb" style="left:108.36px;width:43.96px"></i><i class="tb" style="left:156.92px;width:43.96px"></i><b class="kw2" style="left:203.68px">return</b><i class="sp" style="left:246.52px"></i><span class="nm" style="left:250.55px">0</span><span class="op" style="left:256.62px">;</span><i class="eol" style="left:263.09px">CR</i><i class="eol" style="left:277.29px">LF</i><i class="gd" style="left:107.16px"></i><i class="gd" style="left:155.72px"></i></div>
<div class="no" style="top:492.07px">156</div>
<div class="ln" style="top:504.19px"><i class="tb" style="left:59.80px;width:43.96px"></i><i class="tb" style="left:108.36px;width:43.96px"></i><span class="op" style="left:155.12px">}</span><i class="eol" style="left:161.59px">CR</i><i class="eol" style="left:175.79px">LF</i><i class="gd" style="left:107.16px"></i></div>
<div class="no" style="top:504.19px">157</div>
<div class="ln" style="top:516.31px"><i class="tb" style="left:59.80px;width:43.96px"></i><span class="op" style="left:106.56px">}</span><i class="eol" style="left:113.03px">CR</i><i class="eol" style="left:127.23px">LF</i></div>
<div class="no" style="top:516.31px">158</div>
<div class="ln" style="top:528.44px"><i class="eol" style="left:58.40px">CR</i><i class="eol" style="left:72.60px">LF</i></div>
<div class="no" style="top:528.44px">159</div>
<div class="ln" style="top:540.56px"><i class="tb" style="left:59.80px;width:43.96px"></i><span class="tx" style="left:106.56px">SetWindowLongPtr</span><span class="op" style="left:203.68px">(</span><i class="sp" style="left:211.78px"></i><span class="tx" style="left:215.82px">g_hwndMainWindow</span><i class="sp" style="left:314.98px"></i><span class="op" style="left:319.01px">,</span><i class="sp" style="left:327.12px"></i><span class="tx" style="left:331.15px">GWLP_USERDATA</span><i class="sp" style="left:412.09px"></i><span class="op" style="left:416.13px">,</span><i class="sp" style="left:424.23px"></i><span class="tx" style="left:428.27px">hIns</span><span class="op" style="left:452.55px">)</span><span class="op" style="left:458.62px">;</span><i class="eol" style="left:465.09px">CR</i><i class="eol" style="left:479.29px">LF</i></div>
<div class="no" style="top:540.56px">160</div>
 </div>
</div>
<div id="vsb"><div class="chev" style="left:2.8px;top:7px;transform:rotate(45deg)"></div>
 <div class="abs" style="left:0;top:34px;width:11px;height:12.5px;background:#cdcdcd"></div>
 <div class="chev" style="left:2.8px;top:455.2px;transform:rotate(225deg)"></div></div>
<div id="hsb"><div class="chev" style="left:5.2px;top:3.4px;transform:rotate(-45deg)"></div>
 <div class="abs" style="left:13px;top:0;width:423px;height:11px;background:#cdcdcd"></div>
 <div class="chev" style="left:832.4px;top:3.6px;transform:rotate(135deg)"></div></div>
<div id="corner"></div>

<div id="syl">
<div class="sy sel" style="top:0.00px">wWinMain</div>
<div class="sy" style="top:12.12px">MyRegisterClass</div>
<div class="sy" style="top:24.25px">InitInstance</div>
<div class="sy" style="top:36.37px">OnCreateWindow</div>
<div class="sy" style="top:48.50px">UpdateStatusBarPathFilenameInfo</div>
<div class="sy" style="top:60.62px">UpdateStatusBarLocationInfo</div>
<div class="sy" style="top:72.74px">UpdateStatusBarEolModeInfo</div>
<div class="sy" style="top:84.87px">UpdateStatusBarEncodingInfo</div>
<div class="sy" style="top:96.99px">UpdateStatusBarSelectionInfo</div>
<div class="sy" style="top:109.12px">UpdateStatusBar</div>
<div class="sy" style="top:121.24px">UpdateAllWindows</div>
<div class="sy" style="top:133.36px">OnResizeWindow</div>
<div class="sy" style="top:145.49px">PushOpenPathFilenameRecently</div>
<div class="sy" style="top:157.61px">UpdateOpenPathFilenameRecently</div>
<div class="sy" style="top:169.74px">SetCurrentFileTypeChecked</div>
<div class="sy" style="top:181.86px">SetCurrentWindowThemeChecked</div>
<div class="sy" style="top:193.98px">SetViewTabWidthMenuText</div>
<div class="sy" style="top:206.11px">SetSourceCodeAutoCompletedShowAfterInputLength</div>
<div class="sy" style="top:218.23px">SetReloadSymbolListOrTreeIntervalMenuText</div>
<div class="sy" style="top:230.36px">UpdateAllMenus</div>
<div class="sy" style="top:242.48px">BeforeWndProc</div>
<div class="sy" style="top:254.60px">AfterWndProc</div>
<div class="sy" style="top:266.73px">WndProc</div>
<div class="sy" style="top:278.85px">About</div>
</div>

<div id="status"></div>
<div class="stt" style="left:3px"><span class="cjs">路径文件名</span>:D:\Program Files\EUX\test\EditUltra.cpp</div>
<div class="ssep" style="left:510px"></div>
<div class="stt" style="left:514px"><span class="cjs">列</span>:35/84</div>
<div class="stt" style="left:563px"><span class="cjs">行</span>:1317/2522</div>
<div class="stt" style="left:633px"><span class="cjs">偏移量</span>:60541/99932</div>
<div class="ssep" style="left:737px"></div>
<div class="stt" style="left:741px"><span class="cjs">换行符模式</span>:DOS</div>
<div class="ssep" style="left:852px"></div>
<div class="stt" style="left:855px"><span class="cjs">字符编码</span>:UTF8</div>
<div class="ssep" style="left:964px"></div>
<div class="stt" style="left:968px"><span class="cjs">选择文本长度</span>:0</div>

<svg class="abs" style="left:1066px;top:564px" width="12" height="11"><g fill="#b8b8b8"><rect x="10.2" y="3.6" width="1" height="1"/><rect x="7.8" y="6" width="1" height="1"/><rect x="10.2" y="6" width="1" height="1"/><rect x="5.4" y="8.4" width="1" height="1"/><rect x="7.8" y="8.4" width="1" height="1"/><rect x="10.2" y="8.4" width="1" height="1"/></g></svg>
<div id="wm">
<svg class="abs" style="left:0;top:0" width="1080" height="576" viewBox="0 0 1080 576">
 <g fill="#b0b0b0" opacity="0.92">
  <ellipse cx="733.7" cy="526.8" rx="14.6" ry="12.3"/>
  <path d="M724.5 535 L723.6 541.2 L730 537.2 Z"/>
 </g>
 <ellipse cx="747.4" cy="534.7" rx="13.2" ry="10" fill="#3a3a3a" opacity="0.6"/>
 <g fill="#b0b0b0" opacity="0.92">
  <ellipse cx="747.4" cy="534.7" rx="12.4" ry="9.3"/>
  <path d="M752 541 L755.6 547.4 L748 543.2 Z"/>
 </g>
 <g fill="#333">
  <circle cx="728.6" cy="523.3" r="1.5"/><circle cx="738.7" cy="523.3" r="1.5"/>
  <circle cx="743.6" cy="533.6" r="1.3"/><circle cx="752.1" cy="533.6" r="1.3"/>
 </g>
 <circle cx="877.2" cy="532.4" r="1.9" fill="#b4b4b4"/>
</svg>
<div class="wmt" style="left:768.7px;top:512.9px;letter-spacing:0.6px;clip-path:inset(0 calc(100% - 75.3px) 0 0)">公众号</div>
<div class="wmt" style="left:768.7px;top:512.9px;letter-spacing:0.6px;clip-path:inset(0 0 0 75.3px);opacity:0.3">公众号</div>
<div class="wmt" style="left:896px;top:512px;font-size:32px">IT</div>
<div class="wmt" style="left:924px;top:513.9px">学习日记</div>

</div>
</div></body></html>
